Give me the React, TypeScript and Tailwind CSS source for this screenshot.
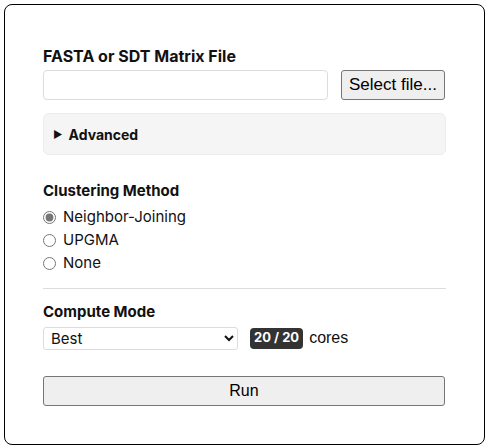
import React from "react";

export default function App() {
  return (
    <div className="p-1 bg-white" style={{ fontFamily: "Inter, 'Noto Sans', sans-serif" }}>
      <div className="w-[481px] h-[441px] border border-black rounded-[8px] px-[38px] pt-[41px] text-[#111]">
        <div className="text-[16px] font-bold leading-[20px] mb-[4px]">FASTA or SDT Matrix File</div>
        <div className="flex items-center gap-[13px]">
          <div className="w-[285px] h-[30px] border border-[#dcdcdc] rounded-[4px] bg-white" />
          <button className="h-[30px] px-[7px] border border-[#767676] rounded-[3px] bg-[#efefef] text-[17px] text-black" style={{ fontFamily: "'Liberation Sans', Arial, sans-serif" }}>
            Select file...
          </button>
        </div>
        <div className="mt-[13px] h-[42px] rounded-[6px] bg-[#f5f5f5] border border-[#ececec] flex items-center pl-[9px] text-[14px] font-bold">
          <span className="text-[10px] mr-[6px]">▶</span>
          <span>Advanced</span>
        </div>
        <div className="mt-[26px] text-[15px] font-bold leading-[20px]">Clustering Method</div>
        <div className="mt-[5px] flex flex-col text-[15px]">
          {[
            ["Neighbor-Joining", true],
            ["UPGMA", false],
            ["None", false],
          ].map(([label, checked]) => (
            <label key={label as string} className="flex items-center h-[23px]">
              <input type="radio" name="cm" defaultChecked={checked as boolean} className="m-0 w-[13px] h-[13px] mr-[7px] accent-[#767676]" />
              <span>{label as string}</span>
            </label>
          ))}
        </div>
        <div className="mt-[13px] h-px bg-[#dddddd]" />
        <div className="mt-[13px] text-[15px] font-bold leading-[20px]">Compute Mode</div>
        <div className="mt-[4px] flex items-center">
          <select className="w-[195px] h-[23px] border border-[#dcdcdc] rounded-[3px] text-[15px] pl-[3px] bg-white">
            <option>Best</option>
          </select>
          <span className="ml-[12px] h-[21px] px-[4px] rounded-[4px] bg-[#333] text-white text-[13px] font-bold flex items-center">20 / 20</span>
          <span className="ml-[6px] text-[16px]" style={{ fontFamily: "'Liberation Sans', Arial, sans-serif" }}>cores</span>
        </div>
        <button className="mt-[26px] w-[402px] h-[30px] border border-[#767676] rounded-[3px] bg-[#efefef] text-[16px] text-black" style={{ fontFamily: "'Liberation Sans', Arial, sans-serif" }}>
          Run
        </button>
      </div>
    </div>
  );
}
